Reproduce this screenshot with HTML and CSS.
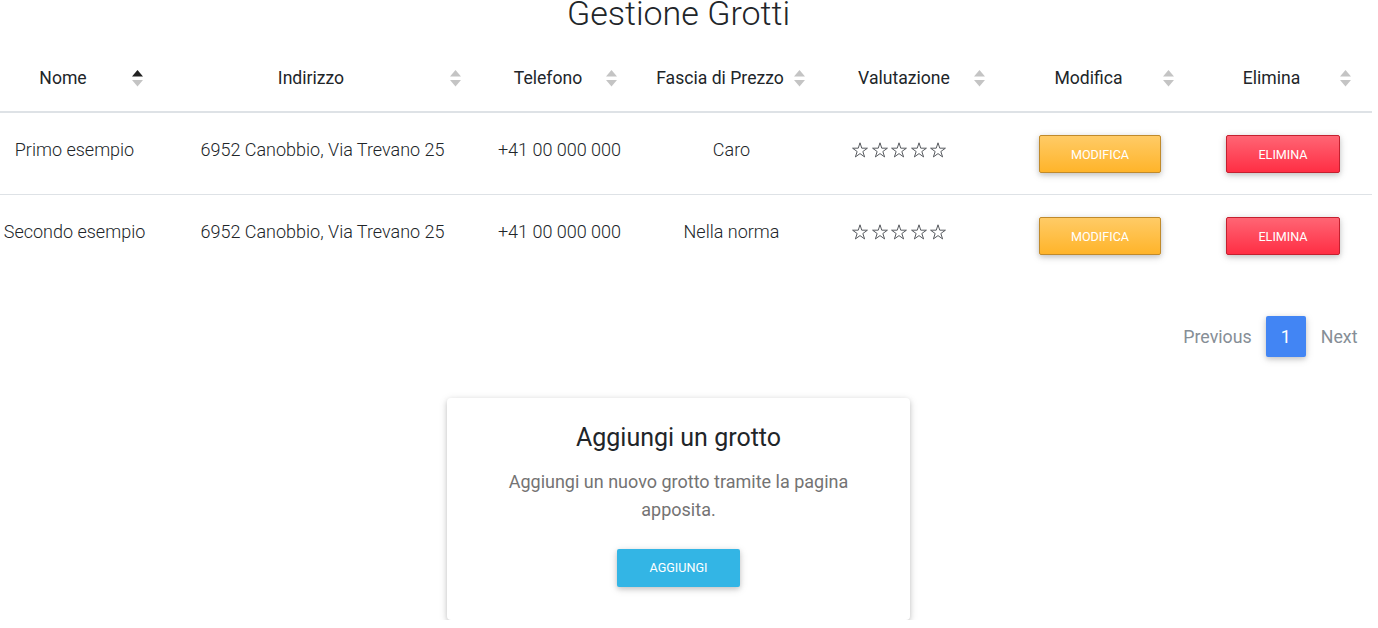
FILE: index.html
```html
<!DOCTYPE html>
<html lang="it">
<head>
<meta charset="utf-8">
<title>Gestione Grotti</title>
<link rel="stylesheet" href="styles.css">
</head>
<body>
<div class="page">
  <h1 class="title">Gestione Grotti</h1>
  <table class="grid">
    <colgroup>
      <col class="c1"><col class="c2"><col class="c3"><col class="c4"><col class="c5"><col class="c6"><col class="c7">
    </colgroup>
    <thead>
      <tr>
        <th><div class="th-in"><span class="th-label">Nome</span><svg class="sort asc" width="11" height="17" viewBox="0 0 11 17"><polygon class="up" points="5.5,0 11,6.5 0,6.5"/><polygon class="down" points="0,10 11,10 5.5,16.5"/></svg></div></th>
        <th><div class="th-in"><span class="th-label">Indirizzo</span><svg class="sort" width="11" height="17" viewBox="0 0 11 17"><polygon class="up" points="5.5,0 11,6.5 0,6.5"/><polygon class="down" points="0,10 11,10 5.5,16.5"/></svg></div></th>
        <th><div class="th-in"><span class="th-label">Telefono</span><svg class="sort" width="11" height="17" viewBox="0 0 11 17"><polygon class="up" points="5.5,0 11,6.5 0,6.5"/><polygon class="down" points="0,10 11,10 5.5,16.5"/></svg></div></th>
        <th><div class="th-in"><span class="th-label">Fascia di Prezzo</span><svg class="sort" width="11" height="17" viewBox="0 0 11 17"><polygon class="up" points="5.5,0 11,6.5 0,6.5"/><polygon class="down" points="0,10 11,10 5.5,16.5"/></svg></div></th>
        <th><div class="th-in"><span class="th-label">Valutazione</span><svg class="sort" width="11" height="17" viewBox="0 0 11 17"><polygon class="up" points="5.5,0 11,6.5 0,6.5"/><polygon class="down" points="0,10 11,10 5.5,16.5"/></svg></div></th>
        <th><div class="th-in"><span class="th-label">Modifica</span><svg class="sort" width="11" height="17" viewBox="0 0 11 17"><polygon class="up" points="5.5,0 11,6.5 0,6.5"/><polygon class="down" points="0,10 11,10 5.5,16.5"/></svg></div></th>
        <th><div class="th-in"><span class="th-label">Elimina</span><svg class="sort" width="11" height="17" viewBox="0 0 11 17"><polygon class="up" points="5.5,0 11,6.5 0,6.5"/><polygon class="down" points="0,10 11,10 5.5,16.5"/></svg></div></th>
      </tr>
    </thead>
    <tbody>
      <tr>
        <td>Primo esempio</td>
        <td>6952 Canobbio, Via Trevano 25</td>
        <td>+41 00 000 000</td>
        <td>Caro</td>
        <td class="stars-cell"><div class="stars">
          <svg width="16" height="16" viewBox="0 0 16 16"><polygon points="8,0.8 9.763,6.173 15.418,6.19 10.853,9.527 12.585,14.91 8,11.6 3.415,14.91 5.147,9.527 0.582,6.19 6.237,6.173"/></svg>
          <svg width="16" height="16" viewBox="0 0 16 16"><polygon points="8,0.8 9.763,6.173 15.418,6.19 10.853,9.527 12.585,14.91 8,11.6 3.415,14.91 5.147,9.527 0.582,6.19 6.237,6.173"/></svg>
          <svg width="16" height="16" viewBox="0 0 16 16"><polygon points="8,0.8 9.763,6.173 15.418,6.19 10.853,9.527 12.585,14.91 8,11.6 3.415,14.91 5.147,9.527 0.582,6.19 6.237,6.173"/></svg>
          <svg width="16" height="16" viewBox="0 0 16 16"><polygon points="8,0.8 9.763,6.173 15.418,6.19 10.853,9.527 12.585,14.91 8,11.6 3.415,14.91 5.147,9.527 0.582,6.19 6.237,6.173"/></svg>
          <svg width="16" height="16" viewBox="0 0 16 16"><polygon points="8,0.8 9.763,6.173 15.418,6.19 10.853,9.527 12.585,14.91 8,11.6 3.415,14.91 5.147,9.527 0.582,6.19 6.237,6.173"/></svg>
        </div></td>
        <td><span class="btn btn-warning">MODIFICA</span></td>
        <td><span class="btn btn-danger">ELIMINA</span></td>
      </tr>
      <tr>
        <td>Secondo esempio</td>
        <td>6952 Canobbio, Via Trevano 25</td>
        <td>+41 00 000 000</td>
        <td>Nella norma</td>
        <td class="stars-cell"><div class="stars">
          <svg width="16" height="16" viewBox="0 0 16 16"><polygon points="8,0.8 9.763,6.173 15.418,6.19 10.853,9.527 12.585,14.91 8,11.6 3.415,14.91 5.147,9.527 0.582,6.19 6.237,6.173"/></svg>
          <svg width="16" height="16" viewBox="0 0 16 16"><polygon points="8,0.8 9.763,6.173 15.418,6.19 10.853,9.527 12.585,14.91 8,11.6 3.415,14.91 5.147,9.527 0.582,6.19 6.237,6.173"/></svg>
          <svg width="16" height="16" viewBox="0 0 16 16"><polygon points="8,0.8 9.763,6.173 15.418,6.19 10.853,9.527 12.585,14.91 8,11.6 3.415,14.91 5.147,9.527 0.582,6.19 6.237,6.173"/></svg>
          <svg width="16" height="16" viewBox="0 0 16 16"><polygon points="8,0.8 9.763,6.173 15.418,6.19 10.853,9.527 12.585,14.91 8,11.6 3.415,14.91 5.147,9.527 0.582,6.19 6.237,6.173"/></svg>
          <svg width="16" height="16" viewBox="0 0 16 16"><polygon points="8,0.8 9.763,6.173 15.418,6.19 10.853,9.527 12.585,14.91 8,11.6 3.415,14.91 5.147,9.527 0.582,6.19 6.237,6.173"/></svg>
        </div></td>
        <td><span class="btn btn-warning">MODIFICA</span></td>
        <td><span class="btn btn-danger">ELIMINA</span></td>
      </tr>
    </tbody>
  </table>

  <nav class="pager">
    <ul class="pagination">
      <li class="page-item disabled"><span class="page-link">Previous</span></li>
      <li class="page-item active"><span class="page-link">1</span></li>
      <li class="page-item disabled"><span class="page-link">Next</span></li>
    </ul>
  </nav>

  <div class="card">
    <div class="card-body">
      <h4 class="card-title">Aggiungi un grotto</h4>
      <p class="card-text">Aggiungi un nuovo grotto tramite la pagina apposita.</p>
      <span class="btn btn-info">AGGIUNGI</span>
    </div>
  </div>
</div>
</body>
</html>
```

FILE: styles.css
```css
html, body {
  margin: 0;
  padding: 0;
  background: #ffffff;
}

body {
  font-family: Roboto, "Liberation Sans", Arial, sans-serif;
  color: #212529;
  overflow: hidden;
}

.page {
  width: 1386px;
  margin-left: -14.5px;
}

.title {
  margin: -6px 0 17px;
  font-size: 34px;
  line-height: 38px;
  font-weight: 300;
  text-align: center;
  color: #212529;
}

.grid {
  width: 1386px;
  table-layout: fixed;
  border-collapse: collapse;
  font-size: 17.6px;
}

.c1 { width: 178px; }
.c2 { width: 318px; }
.c3 { width: 156px; }
.c4 { width: 188px; }
.c5 { width: 180px; }
.c6 { width: 189px; }
.c7 { width: 177px; }

.grid th {
  padding: 16px 21px 20px 9px;
  font-weight: 400;
  line-height: 26px;
  border-bottom: 2px solid #dee2e6;
  color: #212529;
}

.th-in {
  display: flex;
  align-items: center;
}

.th-label {
  flex: 1;
  text-align: center;
  white-space: nowrap;
}

.sort {
  flex: none;
  display: block;
}

.sort polygon { fill: #c4c4c4; }
.sort.asc .up { fill: #222222; }

.grid td {
  padding: 22px 8px 21px;
  text-align: center;
  vertical-align: top;
  font-size: 18px;
  line-height: 30px;
  font-weight: 300;
  color: #212529;
  white-space: nowrap;
}

.grid tbody tr + tr td {
  border-top: 1px solid #dee2e6;
}

.grid td.stars-cell {
  text-align: left;
  padding-left: 26.5px;
}

.stars {
  display: flex;
  gap: 3.5px;
  padding-top: 7px;
}

.stars svg {
  display: block;
}

.stars polygon {
  fill: none;
  stroke: #4f5257;
  stroke-width: 0.95;
  stroke-linejoin: miter;
}

.btn {
  display: inline-block;
  box-sizing: border-box;
  height: 38px;
  line-height: 37px;
  padding: 0 31px;
  border: 1px solid transparent;
  border-radius: 2px;
  font-size: 12.6px;
  font-weight: 400;
  color: #ffffff;
  vertical-align: top;
  box-shadow: 0 2px 5px 0 rgba(0, 0, 0, 0.16), 0 2px 10px 0 rgba(0, 0, 0, 0.12);
  white-space: nowrap;
}

.btn-warning {
  background: linear-gradient(to bottom, #ffcb66, #ffb42a);
  border-color: #c08a2b;
}

.btn-danger {
  background: linear-gradient(to bottom, #ff6574, #ff2e44);
  border-color: #c4202f;
}

.btn-info {
  background: #33b5e5;
  border: 0;
  line-height: 38px;
  padding: 0 32.5px;
}

.pager {
  display: flex;
  justify-content: flex-end;
  margin-top: 40px;
}

.pagination {
  display: flex;
  list-style: none;
  margin: 0 -1px 0 0;
  padding: 0;
}

.page-link {
  display: block;
  padding: 0 15px;
  font-size: 17.8px;
  line-height: 41px;
  color: #868e96;
  border-radius: 2px;
}

.page-item:first-child .page-link {
  padding-right: 14px;
}

.page-item.active .page-link {
  background: #4285f4;
  color: #ffffff;
  box-shadow: 0 2px 5px 0 rgba(0, 0, 0, 0.16), 0 2px 10px 0 rgba(0, 0, 0, 0.12);
}

.card {
  width: 463px;
  margin: 41px auto 0;
  border-radius: 4px;
  background: #ffffff;
  box-shadow: 0 2px 5px 0 rgba(0, 0, 0, 0.16), 0 2px 10px 0 rgba(0, 0, 0, 0.12);
}

.card-body {
  padding: 25px 30px 33px;
  text-align: center;
}

.card-title {
  margin: 0;
  font-size: 25px;
  line-height: 29px;
  font-weight: 400;
  color: #212529;
}

.card-text {
  margin: 16px 0 25px;
  font-size: 18px;
  line-height: 28px;
  font-weight: 400;
  color: #747373;
}
```
